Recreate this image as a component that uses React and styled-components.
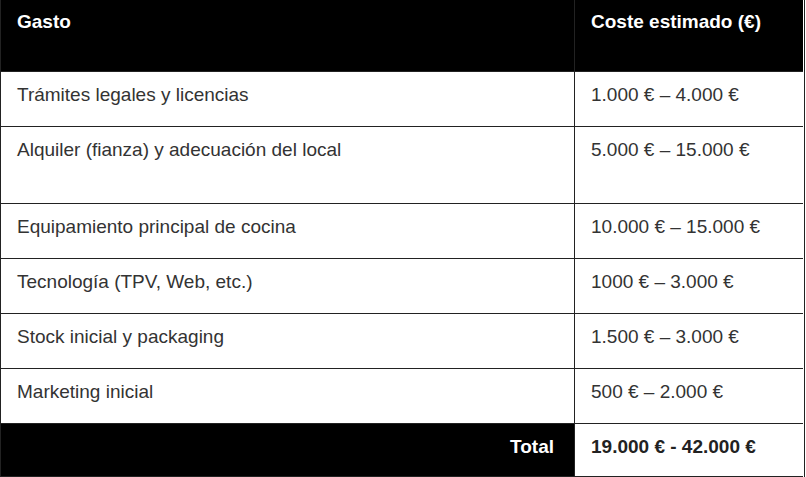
import React from "react";
import styled, { createGlobalStyle } from "styled-components";

const GlobalStyle = createGlobalStyle`
  html, body {
    margin: 0;
    padding: 0;
    background: #fff;
  }
  body {
    font-family: "Liberation Sans", Arial, sans-serif;
  }
`;

const Table = styled.div`
  display: grid;
  grid-template-columns: 574px 228px;
  width: 805px;
  border-left: 1px solid #222;
  border-right: 1px solid #222;
  box-sizing: border-box;
  font-size: 19px;
  color: #333;
`;

const Cell = styled.div`
  box-sizing: border-box;
  height: ${(p) => p.$h}px;
  padding: ${(p) => p.$pt || 12}px ${(p) => (p.$right ? 20 : 16)}px 0 16px;
  border-bottom: 1px solid #222;
  border-right: ${(p) => (p.$first ? "1px solid #222" : "none")};
  background: ${(p) => (p.$dark ? "#000" : "#fff")};
  color: ${(p) => (p.$dark ? "#fff" : p.$bold ? "#222" : "#333")};
  font-weight: ${(p) => (p.$bold ? 700 : 400)};
  text-align: ${(p) => (p.$right ? "right" : "left")};
  white-space: nowrap;
`;

const rows = [
  ["Trámites legales y licencias", "1.000 € – 4.000 €", 55],
  ["Alquiler (fianza) y adecuación del local", "5.000 € – 15.000 €", 77],
  ["Equipamiento principal de cocina", "10.000 € – 15.000 €", 55],
  ["Tecnología (TPV, Web, etc.)", "1000 € – 3.000 €", 55],
  ["Stock inicial y packaging", "1.500 € – 3.000 €", 55],
  ["Marketing inicial", "500 € – 2.000 €", 55],
];

const App = () => {
  return (
    <>
      <GlobalStyle />
      <Table>
        <Cell $h={72} $pt={11} $dark $bold $first>
          Gasto
        </Cell>
        <Cell $h={72} $pt={11} $dark $bold>
          Coste estimado (€)
        </Cell>
        {rows.map(([name, cost, h]) => (
          <React.Fragment key={name}>
            <Cell $h={h} $first>
              {name}
            </Cell>
            <Cell $h={h}>{cost}</Cell>
          </React.Fragment>
        ))}
        <Cell $h={53} $dark $bold $right $first>
          Total
        </Cell>
        <Cell $h={53} $bold>
          19.000 € - 42.000 €
        </Cell>
      </Table>
    </>
  );
};

export default App;
